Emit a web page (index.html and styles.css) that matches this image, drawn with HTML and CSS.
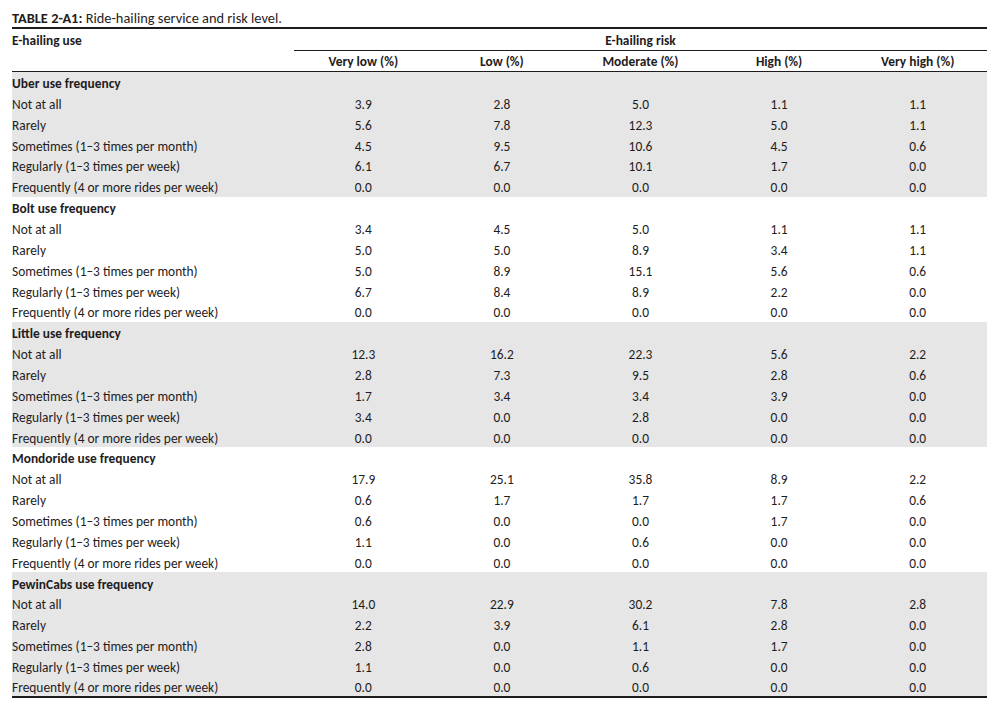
FILE: index.html
```html
<!DOCTYPE html>
<html lang="en">
<head>
<meta charset="utf-8">
<title>Table 2-A1</title>
<link rel="stylesheet" href="styles.css">
</head>
<body>
<div class="page">
  <div class="title"><b>TABLE 2-A1:</b> Ride-hailing service and risk level.</div>
  <table class="data">
    <colgroup>
      <col class="c-label">
      <col class="c-val"><col class="c-val"><col class="c-val"><col class="c-val"><col class="c-val">
    </colgroup>
    <thead>
      <tr class="h1">
        <th class="lbl">E-hailing use</th>
        <th colspan="5" class="risk">E-hailing risk</th>
      </tr>
      <tr class="h2">
        <th></th>
        <th>Very low (%)</th>
        <th>Low (%)</th>
        <th>Moderate (%)</th>
        <th>High (%)</th>
        <th>Very high (%)</th>
      </tr>
    </thead>
    <tbody class="shade">
      <tr><th colspan="6" class="grp">Uber use frequency</th></tr>
      <tr><td>Not at all</td><td>3.9</td><td>2.8</td><td>5.0</td><td>1.1</td><td>1.1</td></tr>
      <tr><td>Rarely</td><td>5.6</td><td>7.8</td><td>12.3</td><td>5.0</td><td>1.1</td></tr>
      <tr><td>Sometimes (1–3 times per month)</td><td>4.5</td><td>9.5</td><td>10.6</td><td>4.5</td><td>0.6</td></tr>
      <tr><td>Regularly (1–3 times per week)</td><td>6.1</td><td>6.7</td><td>10.1</td><td>1.7</td><td>0.0</td></tr>
      <tr><td>Frequently (4 or more rides per week)</td><td>0.0</td><td>0.0</td><td>0.0</td><td>0.0</td><td>0.0</td></tr>
    </tbody>
    <tbody>
      <tr><th colspan="6" class="grp">Bolt use frequency</th></tr>
      <tr><td>Not at all</td><td>3.4</td><td>4.5</td><td>5.0</td><td>1.1</td><td>1.1</td></tr>
      <tr><td>Rarely</td><td>5.0</td><td>5.0</td><td>8.9</td><td>3.4</td><td>1.1</td></tr>
      <tr><td>Sometimes (1–3 times per month)</td><td>5.0</td><td>8.9</td><td>15.1</td><td>5.6</td><td>0.6</td></tr>
      <tr><td>Regularly (1–3 times per week)</td><td>6.7</td><td>8.4</td><td>8.9</td><td>2.2</td><td>0.0</td></tr>
      <tr><td>Frequently (4 or more rides per week)</td><td>0.0</td><td>0.0</td><td>0.0</td><td>0.0</td><td>0.0</td></tr>
    </tbody>
    <tbody class="shade">
      <tr><th colspan="6" class="grp">Little use frequency</th></tr>
      <tr><td>Not at all</td><td>12.3</td><td>16.2</td><td>22.3</td><td>5.6</td><td>2.2</td></tr>
      <tr><td>Rarely</td><td>2.8</td><td>7.3</td><td>9.5</td><td>2.8</td><td>0.6</td></tr>
      <tr><td>Sometimes (1–3 times per month)</td><td>1.7</td><td>3.4</td><td>3.4</td><td>3.9</td><td>0.0</td></tr>
      <tr><td>Regularly (1–3 times per week)</td><td>3.4</td><td>0.0</td><td>2.8</td><td>0.0</td><td>0.0</td></tr>
      <tr><td>Frequently (4 or more rides per week)</td><td>0.0</td><td>0.0</td><td>0.0</td><td>0.0</td><td>0.0</td></tr>
    </tbody>
    <tbody>
      <tr><th colspan="6" class="grp">Mondoride use frequency</th></tr>
      <tr><td>Not at all</td><td>17.9</td><td>25.1</td><td>35.8</td><td>8.9</td><td>2.2</td></tr>
      <tr><td>Rarely</td><td>0.6</td><td>1.7</td><td>1.7</td><td>1.7</td><td>0.6</td></tr>
      <tr><td>Sometimes (1–3 times per month)</td><td>0.6</td><td>0.0</td><td>0.0</td><td>1.7</td><td>0.0</td></tr>
      <tr><td>Regularly (1–3 times per week)</td><td>1.1</td><td>0.0</td><td>0.6</td><td>0.0</td><td>0.0</td></tr>
      <tr><td>Frequently (4 or more rides per week)</td><td>0.0</td><td>0.0</td><td>0.0</td><td>0.0</td><td>0.0</td></tr>
    </tbody>
    <tbody class="shade last">
      <tr><th colspan="6" class="grp">PewinCabs use frequency</th></tr>
      <tr><td>Not at all</td><td>14.0</td><td>22.9</td><td>30.2</td><td>7.8</td><td>2.8</td></tr>
      <tr><td>Rarely</td><td>2.2</td><td>3.9</td><td>6.1</td><td>2.8</td><td>0.0</td></tr>
      <tr><td>Sometimes (1–3 times per month)</td><td>2.8</td><td>0.0</td><td>1.1</td><td>1.7</td><td>0.0</td></tr>
      <tr><td>Regularly (1–3 times per week)</td><td>1.1</td><td>0.0</td><td>0.6</td><td>0.0</td><td>0.0</td></tr>
      <tr><td>Frequently (4 or more rides per week)</td><td>0.0</td><td>0.0</td><td>0.0</td><td>0.0</td><td>0.0</td></tr>
    </tbody>
  </table>
</div>
</body>
</html>
```

FILE: styles.css
```css
html, body {
  margin: 0;
  padding: 0;
  background: #ffffff;
}

body {
  font-family: "Carlito", "Lato", sans-serif;
  color: #1f1c1d;
  font-size: 13.4px;
}

.page {
  padding: 9px 12px 0 12px;
  width: 975px;
}

.title {
  font-size: 14.4px;
  line-height: 18px;
  height: 18px;
}

.title b {
  font-weight: 700;
}

.data {
  width: 975px;
  table-layout: fixed;
  border-collapse: collapse;
  border-top: 2px solid #1f1c1d;
  border-bottom: 2px solid #1f1c1d;
}

.c-label {
  width: 282px;
}

.c-val {
  width: 138.6px;
}

.data th,
.data td {
  padding: 1px 0 0 0;
  line-height: 15px;
  white-space: nowrap;
  vertical-align: middle;
}

.data tbody th,
.data tbody td {
  padding-top: 3px;
}

.data th {
  font-weight: 700;
}

.h1 th {
  height: 20px;
}

.h1 .lbl {
  text-align: left;
}

.h1 .risk {
  text-align: center;
  border-bottom: 1px solid #1f1c1d;
}

.h2 th {
  height: 19px;
  text-align: center;
  border-bottom: 1px solid #1f1c1d;
}

.data tbody tr {
  height: 20.86px;
}

.data td {
  text-align: center;
}

.data td:first-child,
.data .grp {
  text-align: left;
}

.shade tr {
  background: #e6e6e6;
}
```
